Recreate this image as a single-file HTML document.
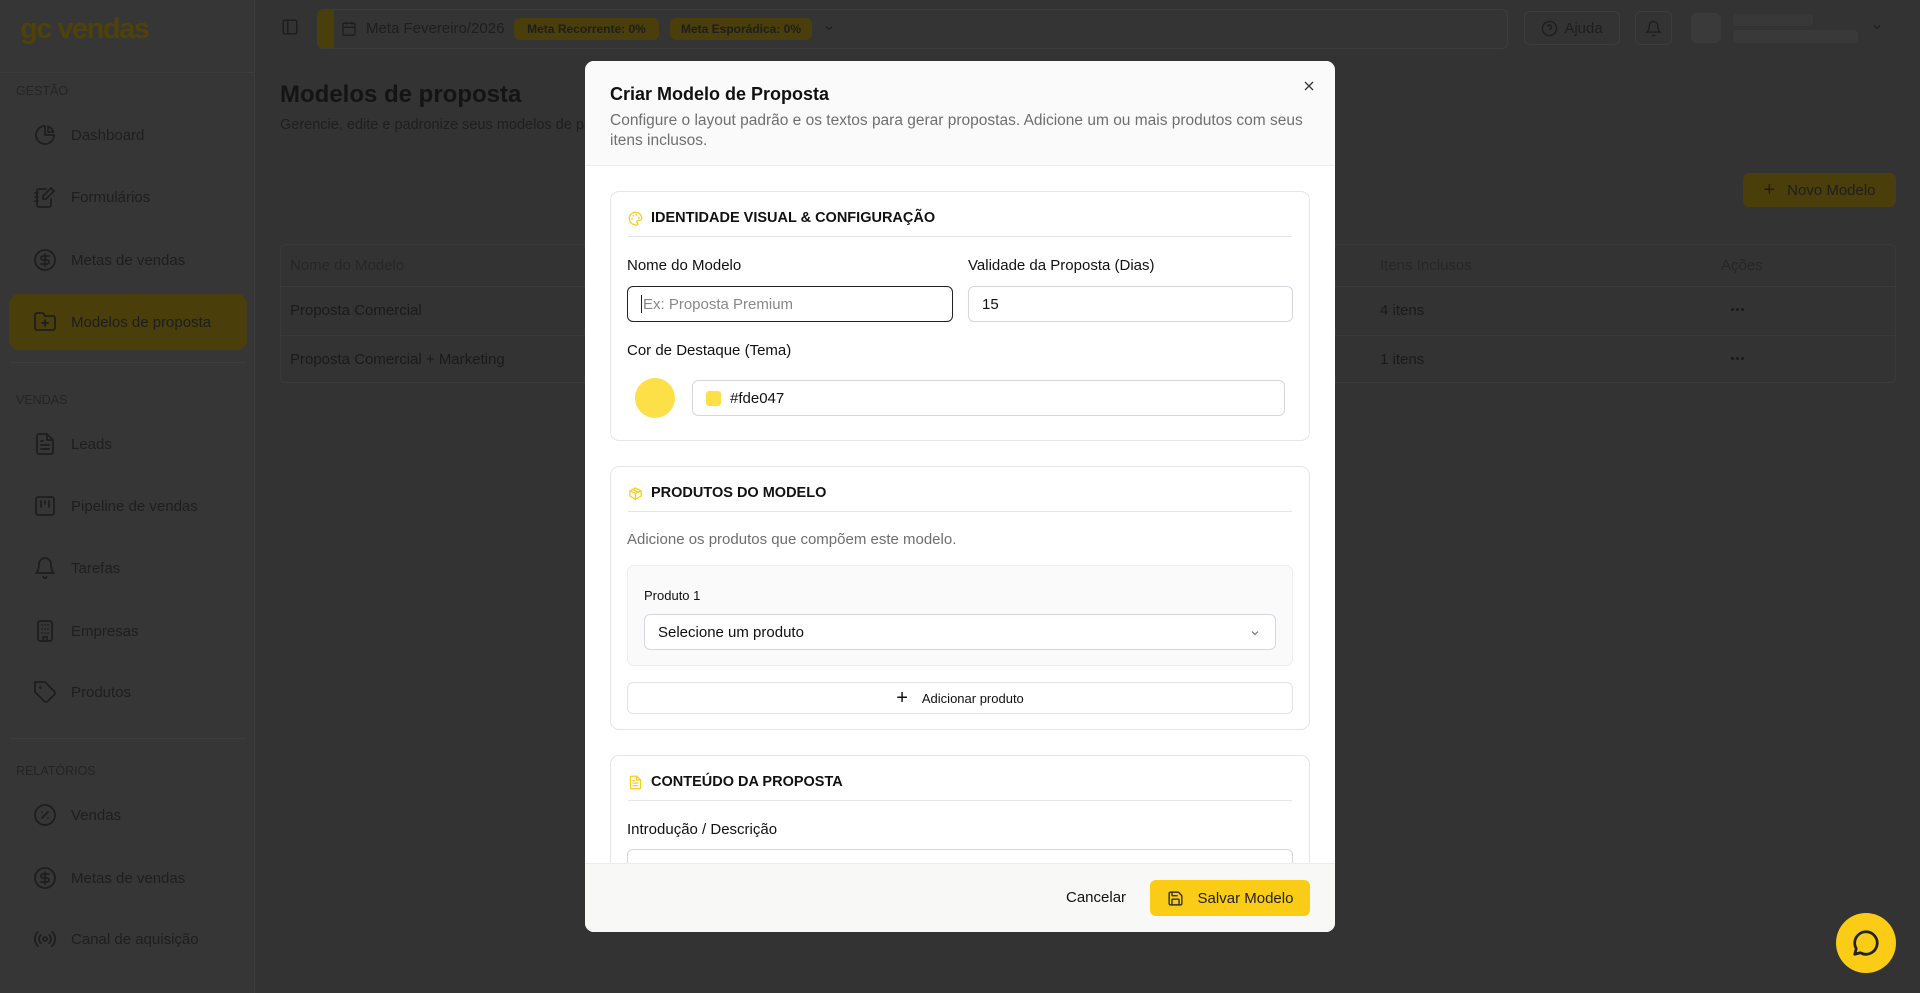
<!DOCTYPE html>
<html><head><meta charset="utf-8">
<style>
*{box-sizing:border-box;margin:0;padding:0}
body{width:1920px;height:993px;overflow:hidden;background:#333;font-family:"Liberation Sans",sans-serif;position:relative;color:#1a1a1a}
.abs{position:absolute}
.sb{left:0;top:0;width:255px;height:993px;background:#363636;border-right:1px solid #3c3c3c}
.logo{left:20px;top:13px;font-size:29px;font-weight:700;color:#4e4208;letter-spacing:-1.5px}
.sec{font-size:12.5px;color:#242424;left:16px}
.nav{left:33px;font-size:15px;color:#1e1e1e;display:flex;align-items:center;gap:14px;font-weight:500}
.nav svg{width:24px;height:24px;fill:none;stroke:#1e1e1e;stroke-width:1.8;stroke-linecap:round;stroke-linejoin:round}
.divl{left:10px;width:236px;height:1px;background:#3d3d3d}
.modal{left:585px;top:61px;width:750px;height:871px;background:#fff;border-radius:9px;overflow:hidden}
.card{left:25px;width:700px;border:1px solid #e6e6e6;border-radius:9px;background:#fff}
.ct{position:absolute;left:17px;font-size:14.5px;font-weight:700;color:#111;display:flex;align-items:center;gap:8px}
.ct svg{width:15px;height:15px;fill:none;stroke:#facc15;stroke-width:2;stroke-linecap:round;stroke-linejoin:round}
.hr{position:absolute;left:17px;right:17px;height:1px;background:#e5e5e5}
.lbl{position:absolute;font-size:15px;color:#111;font-weight:500}
.inp{position:absolute;height:36px;border:1px solid #d4d8de;border-radius:6px;font-size:15px;display:flex;align-items:center;padding-left:13px;color:#111}
</style></head><body>
<div class="abs sb"></div>
<div class="abs" style="left:0;top:72px;width:255px;height:1px;background:#3d3d3d"></div>
<div class="abs logo">gc vendas</div>
<div class="abs sec" style="top:84px">GESTÃO</div>
<div class="abs nav" style="top:123px"><svg viewBox="0 0 24 24"><path d="M21 12A9 9 0 1 1 12 3v9z"/><path d="M15 3.5A9 9 0 0 1 20.5 9H15z"/></svg>Dashboard</div>
<div class="abs nav" style="top:185px"><svg viewBox="0 0 24 24"><path d="M13 4H6a2 2 0 0 0-2 2v14a2 2 0 0 0 2 2h10a2 2 0 0 0 2-2v-6"/><path d="M18 3l3 3-8 8h-3v-3z"/><path d="M2 8h3M2 12h3M2 16h3"/></svg>Formulários</div>
<div class="abs nav" style="top:248px"><svg viewBox="0 0 24 24"><circle cx="12" cy="12" r="10"/><path d="M16 8h-6a2 2 0 0 0 0 4h4a2 2 0 0 1 0 4H8M12 18V6"/></svg>Metas de vendas</div>
<div class="abs" style="left:9px;top:294px;width:238px;height:56px;background:#4a3e0a;border-radius:10px"></div>
<div class="abs nav" style="top:310px"><svg viewBox="0 0 24 24"><path d="M4 20h16a2 2 0 0 0 2-2V8a2 2 0 0 0-2-2h-8l-2-3H4a2 2 0 0 0-2 2v13a2 2 0 0 0 2 2z"/><path d="M12 10v6M9 13h6"/></svg>Modelos de proposta</div>
<div class="abs divl" style="top:362px"></div>
<div class="abs sec" style="top:393px">VENDAS</div>
<div class="abs nav" style="top:432px"><svg viewBox="0 0 24 24"><path d="M14 2H6a2 2 0 0 0-2 2v16a2 2 0 0 0 2 2h12a2 2 0 0 0 2-2V8z"/><path d="M14 2v6h6M8 13h8M8 17h8M8 9h2"/></svg>Leads</div>
<div class="abs nav" style="top:494px"><svg viewBox="0 0 24 24"><rect x="3" y="3" width="18" height="18" rx="2"/><path d="M8 7v6M12 7v3M16 7v6"/></svg>Pipeline de vendas</div>
<div class="abs nav" style="top:556px"><svg viewBox="0 0 24 24"><path d="M6 8a6 6 0 0 1 12 0c0 7 3 9 3 9H3s3-2 3-9"/><path d="M10.3 21a1.9 1.9 0 0 0 3.4 0"/></svg>Tarefas</div>
<div class="abs nav" style="top:619px"><svg viewBox="0 0 24 24"><rect x="5" y="2" width="14" height="20" rx="2"/><path d="M10 22v-4h4v4M9 6h.01M12 6h.01M15 6h.01M9 10h.01M12 10h.01M15 10h.01M9 14h.01M12 14h.01M15 14h.01"/></svg>Empresas</div>
<div class="abs nav" style="top:680px"><svg viewBox="0 0 24 24"><path d="M12 2H2v10l9.3 9.3a2.4 2.4 0 0 0 3.4 0l6.6-6.6a2.4 2.4 0 0 0 0-3.4z"/><circle cx="7.5" cy="7.5" r=".5"/></svg>Produtos</div>
<div class="abs divl" style="top:738px"></div>
<div class="abs sec" style="top:764px">RELATÓRIOS</div>
<div class="abs nav" style="top:803px"><svg viewBox="0 0 24 24"><circle cx="12" cy="12" r="10"/><path d="M9 15l6-6M9 9h.01M15 15h.01"/></svg>Vendas</div>
<div class="abs nav" style="top:866px"><svg viewBox="0 0 24 24"><circle cx="12" cy="12" r="10"/><path d="M16 8h-6a2 2 0 0 0 0 4h4a2 2 0 0 1 0 4H8M12 18V6"/></svg>Metas de vendas</div>
<div class="abs nav" style="top:927px"><svg viewBox="0 0 24 24"><circle cx="12" cy="12" r="2"/><path d="M16.2 7.8a6 6 0 0 1 0 8.4M7.8 16.2a6 6 0 0 1 0-8.4M19.1 4.9a10 10 0 0 1 0 14.2M4.9 19.1a10 10 0 0 1 0-14.2"/></svg>Canal de aquisição</div>

<!-- topbar -->
<svg class="abs" style="left:281px;top:18px" width="18" height="18" viewBox="0 0 24 24" fill="none" stroke="#1e1e1e" stroke-width="2"><rect x="3" y="3" width="18" height="18" rx="2"/><path d="M9 3v18"/></svg>
<div class="abs" style="left:317px;top:9px;width:1191px;height:40px;border:1px solid #3c3c3c;border-radius:6px;background:#343434;overflow:hidden">
 <div style="position:absolute;left:0;top:0;width:16px;height:40px;background:#4a3e0a"></div>
</div>
<svg class="abs" style="left:341px;top:20px" width="16" height="17" viewBox="0 0 24 24" fill="none" stroke="#1e1e1e" stroke-width="2"><rect x="3" y="4" width="18" height="18" rx="2"/><path d="M16 2v4M8 2v4M3 10h18"/></svg>
<div class="abs" style="left:366px;top:20px;font-size:15px;color:#1e1e1e">Meta Fevereiro/2026</div>
<div class="abs" style="left:514px;top:18px;width:145px;height:22px;background:#4a3e0a;border-radius:6px;font-size:12px;font-weight:700;color:#1e1e1e;text-align:center;line-height:22px">Meta Recorrente: 0%</div>
<div class="abs" style="left:670px;top:18px;width:142px;height:22px;background:#4a3e0a;border-radius:6px;font-size:12px;font-weight:700;color:#1e1e1e;text-align:center;line-height:22px">Meta Esporádica: 0%</div>
<svg class="abs" style="left:823px;top:22px" width="12" height="12" viewBox="0 0 24 24" fill="none" stroke="#1e1e1e" stroke-width="2.5"><path d="M6 9l6 6 6-6"/></svg>
<div class="abs" style="left:1524px;top:11px;width:96px;height:34px;border:1px solid #3c3c3c;border-radius:6px;display:flex;align-items:center;justify-content:center;gap:6px;font-size:15px;color:#1e1e1e"><svg width="17" height="17" viewBox="0 0 24 24" fill="none" stroke="#1e1e1e" stroke-width="2"><circle cx="12" cy="12" r="10"/><path d="M9.1 9a3 3 0 0 1 5.8 1c0 2-3 3-3 3M12 17h.01"/></svg>Ajuda</div>
<div class="abs" style="left:1635px;top:11px;width:37px;height:34px;border:1px solid #3c3c3c;border-radius:6px;display:flex;align-items:center;justify-content:center"><svg width="17" height="17" viewBox="0 0 24 24" fill="none" stroke="#1e1e1e" stroke-width="2"><path d="M6 8a6 6 0 0 1 12 0c0 7 3 9 3 9H3s3-2 3-9"/><path d="M10.3 21a1.9 1.9 0 0 0 3.4 0"/></svg></div>
<div class="abs" style="left:1691px;top:13px;width:30px;height:30px;background:#3a3a3a;border-radius:6px"></div>
<div class="abs" style="left:1733px;top:14px;width:80px;height:12px;background:#383838;border-radius:4px"></div>
<div class="abs" style="left:1733px;top:30px;width:125px;height:13px;background:#393939;border-radius:4px"></div>
<svg class="abs" style="left:1871px;top:21px" width="12" height="12" viewBox="0 0 24 24" fill="none" stroke="#1e1e1e" stroke-width="2.5"><path d="M6 9l6 6 6-6"/></svg>

<!-- page -->
<div class="abs" style="left:280px;top:81px;font-size:24px;font-weight:700;color:#141414">Modelos de proposta</div>
<div class="abs" style="left:280px;top:117px;font-size:14.5px;color:#1e1e1e">Gerencie, edite e padronize seus modelos de proposta</div>
<div class="abs" style="left:1743px;top:173px;width:153px;height:34px;background:#4a3e0a;border-radius:6px;display:flex;align-items:center;justify-content:center;gap:12px;font-size:15px;color:#1e1e1e"><span style="font-size:20px">+</span>Novo Modelo</div>
<div class="abs" style="left:280px;top:244px;width:1616px;height:139px;border:1px solid #3a3a3a;border-radius:6px">
 <div style="position:absolute;left:0;right:0;top:41px;height:1px;background:#3a3a3a"></div>
 <div style="position:absolute;left:0;right:0;top:90px;height:1px;background:#3a3a3a"></div>
 <div style="position:absolute;left:9px;top:12px;font-size:15px;color:#262626">Nome do Modelo</div>
 <div style="position:absolute;left:9px;top:57px;font-size:15px;color:#1a1a1a">Proposta Comercial</div>
 <div style="position:absolute;left:9px;top:106px;font-size:15px;color:#1a1a1a">Proposta Comercial + Marketing</div>
 <div style="position:absolute;left:1099px;top:12px;font-size:15px;color:#262626">Itens Inclusos</div>
 <div style="position:absolute;left:1099px;top:57px;font-size:15px;color:#1a1a1a">4 itens</div>
 <div style="position:absolute;left:1099px;top:106px;font-size:15px;color:#1a1a1a">1 itens</div>
 <div style="position:absolute;left:1440px;top:12px;font-size:15px;color:#262626">Ações</div>
 <div style="position:absolute;left:1449px;top:63px;width:14px;height:3px;background:radial-gradient(circle,#1a1a1a 1.4px,transparent 1.6px) 0 0/5px 3px"></div>
 <div style="position:absolute;left:1449px;top:112px;width:14px;height:3px;background:radial-gradient(circle,#1a1a1a 1.4px,transparent 1.6px) 0 0/5px 3px"></div>
</div>

<!-- modal -->
<div class="abs modal">
 <div style="position:absolute;left:0;top:0;width:750px;height:105px;background:#fafafa;border-bottom:1px solid #ececec"></div>
 <div style="position:absolute;left:25px;top:23px;font-size:18px;font-weight:700;color:#111">Criar Modelo de Proposta</div>
 <div style="position:absolute;left:25px;top:50px;width:700px;font-size:15.5px;line-height:20px;color:#6f6f6f">Configure o layout padrão e os textos para gerar propostas. Adicione um ou mais produtos com seus itens inclusos.</div>
 <svg style="position:absolute;left:718px;top:19px" width="12" height="12" viewBox="0 0 24 24" fill="none" stroke="#333" stroke-width="2.5"><path d="M4 4l16 16M20 4 4 20"/></svg>

 <div class="abs card" style="top:130px;height:250px">
  <div class="ct" style="top:18px"><svg viewBox="0 0 24 24"><path d="M12 22a10 10 0 1 1 10-10c0 2-2 3-4 3h-2a2 2 0 0 0-1 3.7A2 2 0 0 1 12 22z"/><circle cx="13.5" cy="6.5" r=".5"/><circle cx="17.5" cy="10.5" r=".5"/><circle cx="6.5" cy="12.5" r=".5"/><circle cx="8.5" cy="7.5" r=".5"/></svg>IDENTIDADE VISUAL &amp; CONFIGURAÇÃO</div>
  <div class="hr" style="top:44px"></div>
  <div class="lbl" style="left:16px;top:65px">Nome do Modelo</div>
  <div class="inp" style="left:16px;top:94px;width:326px;border:1.5px solid #222;color:#888"><span style="border-left:1px solid #222;height:18px;margin-right:1px"></span>Ex: Proposta Premium</div>
  <div class="lbl" style="left:357px;top:65px">Validade da Proposta (Dias)</div>
  <div class="inp" style="left:357px;top:94px;width:325px">15</div>
  <div class="lbl" style="left:16px;top:150px">Cor de Destaque (Tema)</div>
  <div style="position:absolute;left:24px;top:186px;width:40px;height:40px;border-radius:50%;background:#fde047"></div>
  <div class="inp" style="left:81px;top:188px;width:593px;height:36px"><span style="width:15px;height:15px;background:#fde047;border-radius:3px;margin-right:9px"></span>#fde047</div>
 </div>

 <div class="abs card" style="top:405px;height:264px">
  <div class="ct" style="top:18px"><svg viewBox="0 0 24 24"><path d="M21 8 12 3 3 8v8l9 5 9-5z"/><path d="M3.3 7.5 12 12l8.7-4.5M12 22V12M7.5 5.3l9 5"/></svg>PRODUTOS DO MODELO</div>
  <div class="hr" style="top:44px"></div>
  <div style="position:absolute;left:16px;top:64px;font-size:15px;color:#6f6f6f">Adicione os produtos que compõem este modelo.</div>
  <div style="position:absolute;left:16px;top:98px;width:666px;height:101px;background:#fafafa;border:1px solid #eee;border-radius:7px">
   <div style="position:absolute;left:16px;top:22px;font-size:13px;font-weight:500;color:#111">Produto 1</div>
   <div class="inp" style="left:16px;top:48px;width:632px;background:#fff">Selecione um produto<svg style="position:absolute;right:14px;top:12px" width="12" height="12" viewBox="0 0 24 24" fill="none" stroke="#666" stroke-width="2"><path d="M6 9l6 6 6-6"/></svg></div>
  </div>
  <div style="position:absolute;left:16px;top:215px;width:666px;height:32px;border:1px solid #e3e3e3;border-radius:6px;display:flex;align-items:center;justify-content:center;gap:14px;font-size:13px;font-weight:500;color:#111"><span style="font-size:20px;font-weight:400">+</span>Adicionar produto</div>
 </div>

 <div class="abs card" style="top:694px;height:200px">
  <div class="ct" style="top:18px"><svg viewBox="0 0 24 24"><path d="M14 2H6a2 2 0 0 0-2 2v16a2 2 0 0 0 2 2h12a2 2 0 0 0 2-2V8z"/><path d="M14 2v6h6M8 13h8M8 17h8M8 9h2"/></svg>CONTEÚDO DA PROPOSTA</div>
  <div class="hr" style="top:44px"></div>
  <div class="lbl" style="left:16px;top:65px">Introdução / Descrição</div>
  <div style="position:absolute;left:16px;top:93px;width:666px;height:80px;border:1px solid #d4d8de;border-radius:6px"></div>
 </div>

 <div style="position:absolute;left:0;top:802px;width:750px;height:69px;background:#f8f8f7;border-top:1px solid #ececec">
  <div style="position:absolute;left:481px;top:25px;font-size:15px;color:#111">Cancelar</div>
  <div style="position:absolute;left:565px;top:16px;width:160px;height:36px;background:#facc15;border-radius:6px;display:flex;align-items:center;justify-content:center;gap:14px;font-size:15px;color:#222"><svg width="17" height="17" viewBox="0 0 24 24" fill="none" stroke="#333" stroke-width="2"><path d="M15.2 3a2 2 0 0 1 1.4.6l3.8 3.8a2 2 0 0 1 .6 1.4V19a2 2 0 0 1-2 2H5a2 2 0 0 1-2-2V5a2 2 0 0 1 2-2z"/><path d="M17 21v-7a1 1 0 0 0-1-1H8a1 1 0 0 0-1 1v7M7 3v4a1 1 0 0 0 1 1h7"/></svg>Salvar Modelo</div>
 </div>
</div>

<div class="abs" style="left:1836px;top:913px;width:60px;height:60px;border-radius:50%;background:#facc15;display:flex;align-items:center;justify-content:center">
 <svg width="30" height="30" viewBox="0 0 24 24" fill="none" stroke="#222" stroke-width="2.2" stroke-linejoin="round"><path d="M12 3a9 9 0 0 0-7.8 13.5L3 21l4.5-1.2A9 9 0 1 0 12 3z"/></svg>
</div>
</body></html>
